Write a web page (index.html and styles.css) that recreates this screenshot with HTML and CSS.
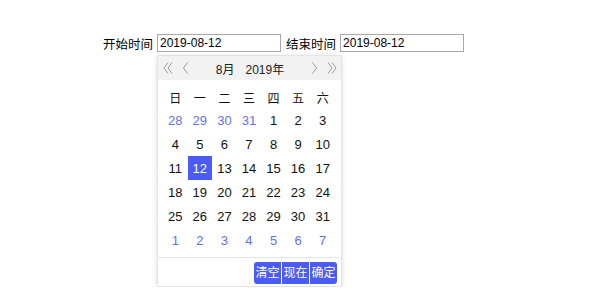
FILE: index.html
```html
<!DOCTYPE html>
<html lang="zh-CN">
<head>
  <meta charset="UTF-8">
  <title>日期范围</title>
  <link rel="stylesheet" href="styles.css">
</head>
<body>
  <div class="range">
    <div class="field">
      <label>开始时间</label>
      <input type="text" value="2019-08-12">
    </div>
    <div class="field">
      <label>结束时间</label>
      <input type="text" value="2019-08-12">
    </div>
  </div>

  <!-- 日期选择弹层 -->
  <div class="picker">
    <div class="picker-head">
      <svg class="nav" width="10" height="12" viewBox="0 0 10 12"><polyline points="5,0.5 1,6 5,11.5"/><polyline points="9,0.5 5,6 9,11.5"/></svg>
      <svg class="nav prev" width="5" height="12" viewBox="0 0 5 12"><polyline points="4.5,0.5 0.5,6 4.5,11.5"/></svg>
      <span class="ym"><span>8月</span><span>2019年</span></span>
      <svg class="nav next" width="5" height="12" viewBox="0 0 5 12"><polyline points="0.5,0.5 4.5,6 0.5,11.5"/></svg>
      <svg class="nav" width="10" height="12" viewBox="0 0 10 12"><polyline points="1,0.5 5,6 1,11.5"/><polyline points="5,0.5 9,6 5,11.5"/></svg>
    </div>
    <div class="picker-body">
      <table id="days">
        <thead>
          <tr><th>日</th><th>一</th><th>二</th><th>三</th><th>四</th><th>五</th><th>六</th></tr>
        </thead>
        <tbody></tbody>
      </table>
    </div>
    <div class="picker-foot">
      <div class="btns">
        <span>清空</span><span>现在</span><span>确定</span>
      </div>
    </div>
  </div>

  <script>
    // 2019年8月 从周四开始，前面补7月末
    const body = document.querySelector('#days tbody');
    const cells = [];
    for (let d = 28; d <= 31; d++) cells.push({ n: d, other: true });
    for (let d = 1; d <= 31; d++) cells.push({ n: d, other: false });
    for (let d = 1; cells.length < 42; d++) cells.push({ n: d, other: true });

    for (let r = 0; r < 6; r++) {
      const tr = document.createElement('tr');
      for (let c = 0; c < 7; c++) {
        const item = cells[r * 7 + c];
        const td = document.createElement('td');
        td.textContent = item.n;
        if (item.other) td.className = 'other';
        if (!item.other && item.n === 12) td.className = 'on';
        tr.appendChild(td);
      }
      body.appendChild(tr);
    }
  </script>
</body>
</html>
```

FILE: styles.css
```css
body {
  margin: 0;
  padding: 34px 0 0 103px;
  font-family: "Liberation Sans", "Noto Sans CJK SC", sans-serif;
  color: #111;
  background: #fff;
}

.range {
  display: flex;
  gap: 5px;
}

.field {
  display: flex;
  align-items: center;
  gap: 4px;
  height: 18px;
}

.field label {
  font-size: 12.5px;
  color: #000;
}

.field input {
  width: 124px;
  height: 18px;
  box-sizing: border-box;
  border: 1px solid #a9a9a9;
  padding: 0 2px;
  font-family: "Liberation Sans", sans-serif;
  font-size: 12px;
  color: #000;
  outline: none;
}

/* 弹层 */
.picker {
  margin: 3px 0 0 54px;
  width: 185px;
  box-sizing: border-box;
  border: 1px solid #e4e4e4;
  border-radius: 2px;
  background: #fff;
  box-shadow: 0 1px 5px rgba(0, 0, 0, 0.14);
}

.picker-head {
  display: flex;
  align-items: center;
  height: 24px;
  padding: 0 4px 0 5px;
  background: #f2f2f2;
  font-size: 12px;
  color: #222;
}

.picker-head .nav {
  fill: none;
  stroke: #9a9a9a;
  stroke-width: 1;
}

.picker-head .prev {
  margin-left: 10px;
}

.picker-head .next {
  margin-right: 10px;
}

.picker-head .ym {
  flex: 1;
  display: flex;
  justify-content: center;
  gap: 11px;
}

.picker-body {
  padding: 6px 5px 5px;
}

.picker-body table {
  width: 172px;
  border-collapse: collapse;
  table-layout: fixed;
}

.picker-body th {
  height: 22px;
  font-weight: normal;
  font-size: 12px;
  color: #111;
  padding: 0;
}

.picker-body td {
  height: 24px;
  padding: 0;
  text-align: center;
  font-size: 13px;
  color: #111;
}

.picker-body td.other {
  color: #6270f5;
}

.picker-body td.on {
  background: #4b5bf6;
  color: #fff;
}

.picker-foot {
  border-top: 1px solid #e6e6e6;
  padding: 4px 4px 2px;
  display: flex;
  justify-content: flex-end;
}

.btns {
  display: flex;
  gap: 1px;
}

.btns span {
  background: #4b5bf6;
  color: #fff;
  font-size: 12px;
  height: 22px;
  line-height: 22px;
  width: 27px;
  text-align: center;
}

.btns span:first-child {
  border-radius: 3px 0 0 3px;
}

.btns span:last-child {
  border-radius: 0 3px 3px 0;
}
```
